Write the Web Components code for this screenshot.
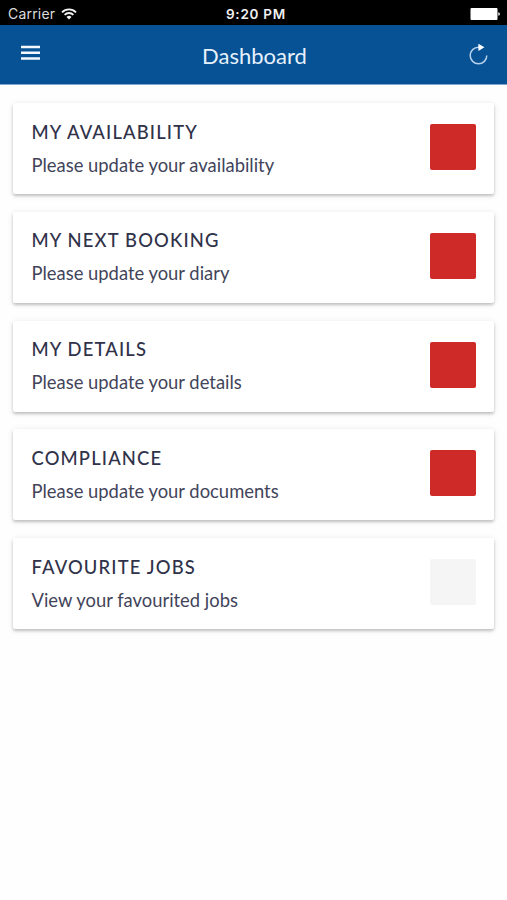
<!DOCTYPE html>
<html lang="en">
<head>
<meta charset="utf-8">
<meta name="viewport" content="width=device-width, initial-scale=1">
<title>Dashboard</title>
<style>
    body {
        margin: 0;
        min-height: 100vh;
        background: #fefefe;
        font-family: Lato, "Liberation Sans", sans-serif;
        color: #30324a;
    }
</style>
</head>
<body>
<status-bar></status-bar>
<app-header>Dashboard</app-header>
<card-list>
    <dash-card heading="MY AVAILABILITY" alert>Please update your availability</dash-card>
    <dash-card heading="MY NEXT BOOKING" alert>Please update your diary</dash-card>
    <dash-card heading="MY DETAILS" alert>Please update your details</dash-card>
    <dash-card heading="COMPLIANCE" alert>Please update your documents</dash-card>
    <dash-card heading="FAVOURITE JOBS">View your favourited jobs</dash-card>
</card-list>

<script>
class StatusBar extends HTMLElement {
    constructor() {
        super();
        this.attachShadow({ mode: 'open' });
    }

    connectedCallback() {
        this.shadowRoot.innerHTML = `
            <style>
                :host {
                    display: grid;
                    grid-template-columns: 1fr auto 1fr;
                    align-items: center;
                    box-sizing: border-box;
                    height: 25px;
                    padding: 2px 7px 0 8px;
                    background: #000;
                    color: #dcdcdc;
                    font: 14px/20px Inter, "Liberation Sans", sans-serif;
                }
                .carrier {
                    display: flex;
                    align-items: center;
                    gap: 6px;
                    letter-spacing: 0.2px;
                }
                .time {
                    padding-left: 4px;
                    font-size: 13.5px;
                    font-weight: 600;
                    letter-spacing: 0.75px;
                    color: #f0f0f0;
                }
                .battery {
                    justify-self: end;
                }
                svg {
                    display: block;
                }
            </style>
            <div class="carrier">
                <span>Carrier</span>
                <svg width="16" height="12" viewBox="0 0 16 12" fill="none" stroke="#f2f2f2" stroke-width="1.9">
                    <path d="M1 4.3a9.9 9.9 0 0 1 14 0M3.6 6.9a6.2 6.2 0 0 1 8.8 0"/>
                    <path d="M8 11.6 5.5 9.1a3.5 3.5 0 0 1 5 0z" fill="#f2f2f2" stroke="none"/>
                </svg>
            </div>
            <div class="time">9:20 PM</div>
            <svg class="battery" width="30" height="12" viewBox="0 0 30 12" fill="#fff">
                <rect x="0.5" y="0" width="27" height="12" rx="1"/>
                <path d="M28.3 4.2q1.6.3 1.6 1.8t-1.6 1.8z"/>
            </svg>
        `;
    }
}

class AppHeader extends HTMLElement {
    constructor() {
        super();
        this.attachShadow({ mode: 'open' });
    }

    connectedCallback() {
        this.shadowRoot.innerHTML = `
            <style>
                :host {
                    display: grid;
                    grid-template-columns: 1fr auto 1fr;
                    align-items: center;
                    box-sizing: border-box;
                    height: 60px;
                    padding: 0 19px 0 21px;
                    background: #075294;
                    border-bottom: 1px solid #7fa6ca;
                    color: #e6f1fc;
                }
                h1 {
                    margin: 0;
                    padding-top: 2px;
                    font-size: 22px;
                    font-weight: 400;
                    line-height: 28px;
                }
                .menu {
                    margin-bottom: 4px;
                }
                .refresh {
                    justify-self: end;
                    margin-bottom: 2px;
                }
                svg {
                    display: block;
                }
            </style>
            <svg class="menu" width="19" height="15" viewBox="0 0 19 15" stroke="#f4f9ff" stroke-width="2.5">
                <path d="M0 2h19M0 7.7h19M0 13.4h19"/>
            </svg>
            <h1><slot></slot></h1>
            <svg class="refresh" width="19" height="22" viewBox="0 0 19 22">
                <path d="M10 4.2H9.5a8.3 8.3 0 1 0 8.3 8.3" fill="none" stroke="#b5d0ec" stroke-width="1.5"/>
                <path d="M9.4.7v7.2l6-3.6z" fill="#fff"/>
            </svg>
        `;
    }
}

class CardList extends HTMLElement {
    constructor() {
        super();
        this.attachShadow({ mode: 'open' });
    }

    connectedCallback() {
        this.shadowRoot.innerHTML = `
            <style>
                :host {
                    display: flex;
                    flex-direction: column;
                    gap: 17.75px;
                    padding: 18px 13px;
                }
            </style>
            <slot></slot>
        `;
    }
}

class DashCard extends HTMLElement {
    constructor() {
        super();
        this.attachShadow({ mode: 'open' });
    }

    connectedCallback() {
        this.shadowRoot.innerHTML = `
            <style>
                :host {
                    display: flex;
                    align-items: center;
                    justify-content: space-between;
                    box-sizing: border-box;
                    height: 91px;
                    padding: 0 18px 3px 18.5px;
                    background: #fff;
                    border-radius: 2px;
                    box-shadow: 0 2px 3px rgba(0, 0, 0, 0.2), 0 1px 7px rgba(0, 0, 0, 0.09);
                }
                .text {
                    padding-top: 3px;
                }
                h2 {
                    margin: 0 0 6px;
                    font-size: 18.4px;
                    font-weight: 500;
                    line-height: 27px;
                    letter-spacing: 1.15px;
                }
                p {
                    margin: 0;
                    font-size: 18.4px;
                    line-height: 27px;
                    color: #42445a;
                }
                .marker {
                    width: 46px;
                    height: 46px;
                    border-radius: 2px;
                    background: #f5f5f5;
                }
                :host([alert]) .marker {
                    background: #ce2a28;
                }
            </style>
            <div class="text">
                <h2></h2>
                <p><slot></slot></p>
            </div>
            <div class="marker"></div>
        `;
        this.shadowRoot.querySelector('h2').textContent = this.getAttribute('heading');
    }
}

customElements.define('status-bar', StatusBar);
customElements.define('app-header', AppHeader);
customElements.define('card-list', CardList);
customElements.define('dash-card', DashCard);
</script>
</body>
</html>
